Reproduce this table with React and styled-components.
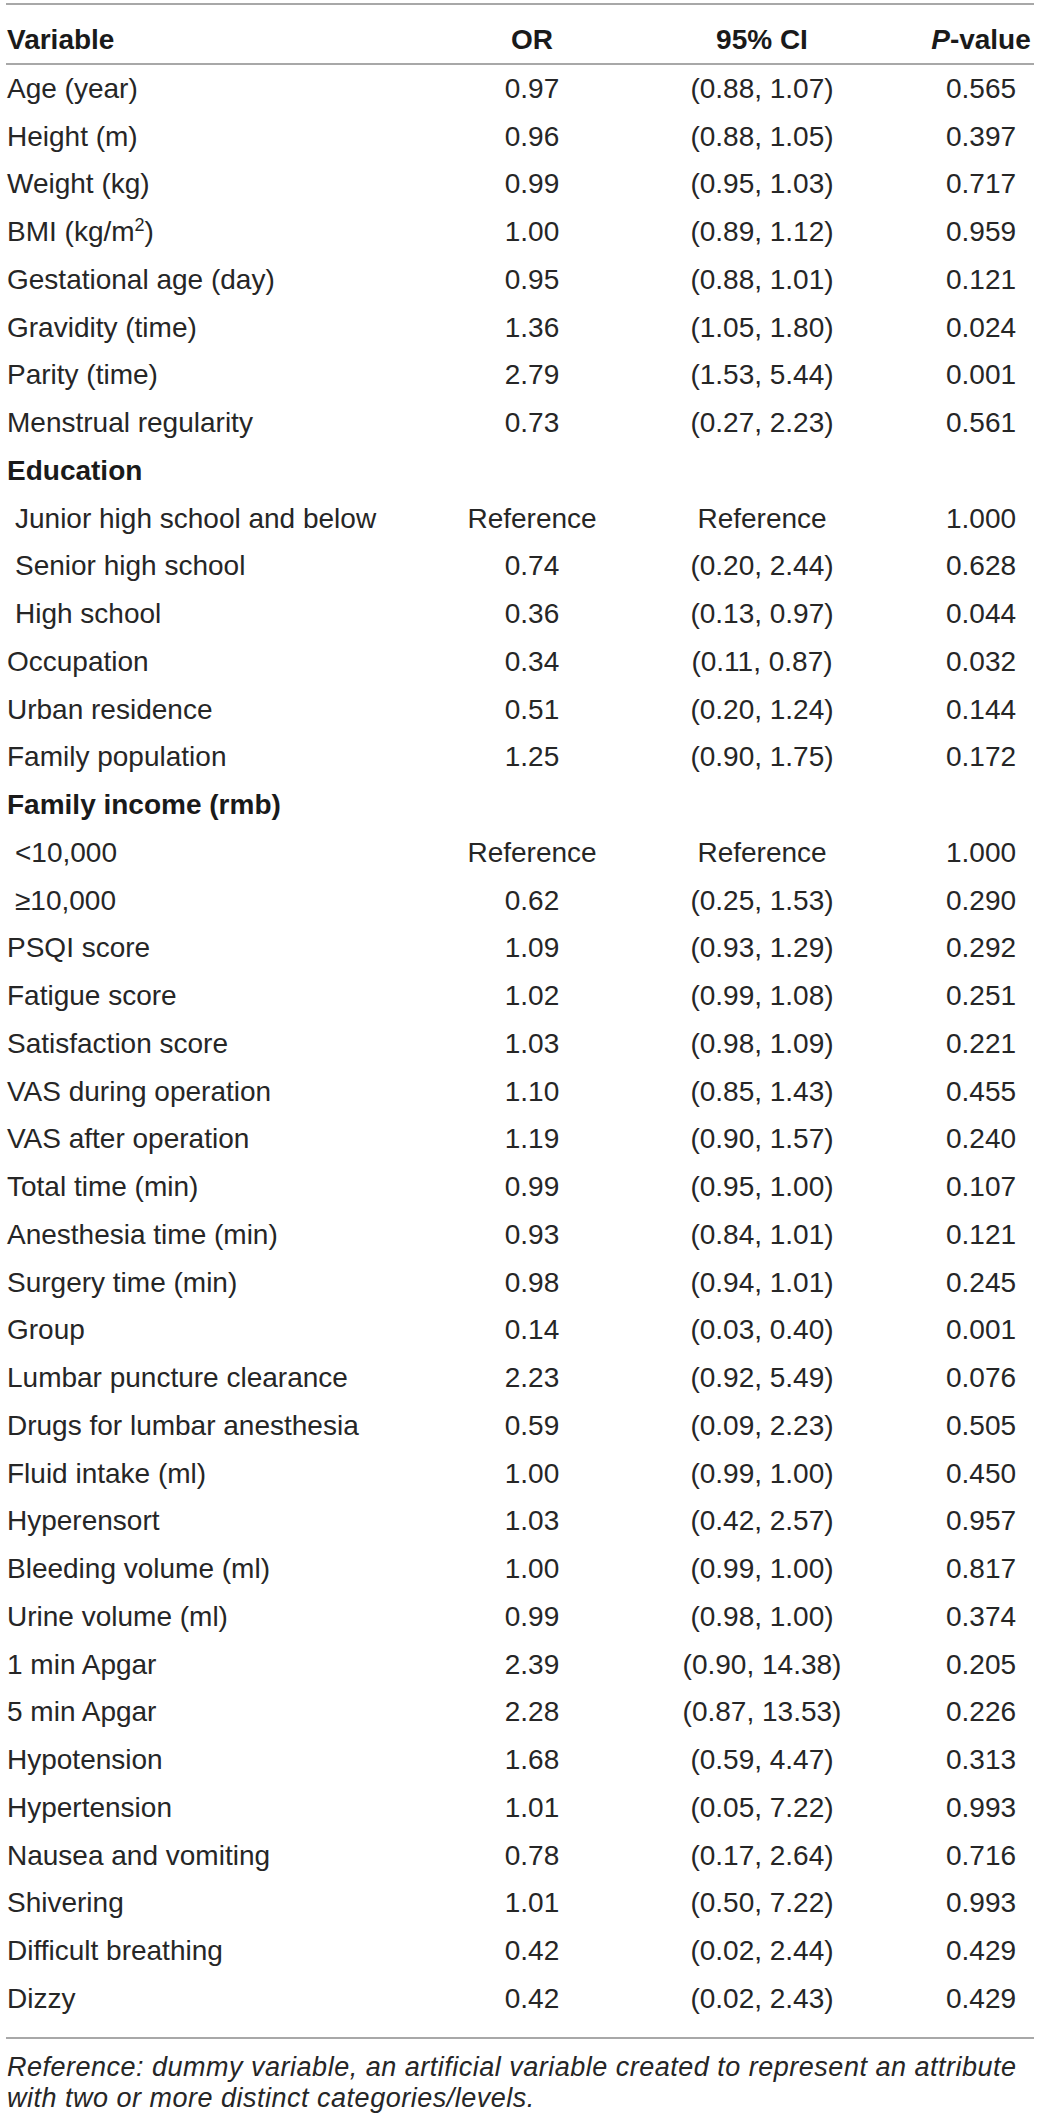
import styled, { createGlobalStyle } from "styled-components";

const rows = [
  ["Age (year)", "0.97", "(0.88, 1.07)", "0.565"],
  ["Height (m)", "0.96", "(0.88, 1.05)", "0.397"],
  ["Weight (kg)", "0.99", "(0.95, 1.03)", "0.717"],
  ["BMI", "1.00", "(0.89, 1.12)", "0.959"],
  ["Gestational age (day)", "0.95", "(0.88, 1.01)", "0.121"],
  ["Gravidity (time)", "1.36", "(1.05, 1.80)", "0.024"],
  ["Parity (time)", "2.79", "(1.53, 5.44)", "0.001"],
  ["Menstrual regularity", "0.73", "(0.27, 2.23)", "0.561"],
  ["Education"],
  ["Junior high school and below", "Reference", "Reference", "1.000", true],
  ["Senior high school", "0.74", "(0.20, 2.44)", "0.628", true],
  ["High school", "0.36", "(0.13, 0.97)", "0.044", true],
  ["Occupation", "0.34", "(0.11, 0.87)", "0.032"],
  ["Urban residence", "0.51", "(0.20, 1.24)", "0.144"],
  ["Family population", "1.25", "(0.90, 1.75)", "0.172"],
  ["Family income (rmb)"],
  ["<10,000", "Reference", "Reference", "1.000", true],
  ["≥10,000", "0.62", "(0.25, 1.53)", "0.290", true],
  ["PSQI score", "1.09", "(0.93, 1.29)", "0.292"],
  ["Fatigue score", "1.02", "(0.99, 1.08)", "0.251"],
  ["Satisfaction score", "1.03", "(0.98, 1.09)", "0.221"],
  ["VAS during operation", "1.10", "(0.85, 1.43)", "0.455"],
  ["VAS after operation", "1.19", "(0.90, 1.57)", "0.240"],
  ["Total time (min)", "0.99", "(0.95, 1.00)", "0.107"],
  ["Anesthesia time (min)", "0.93", "(0.84, 1.01)", "0.121"],
  ["Surgery time (min)", "0.98", "(0.94, 1.01)", "0.245"],
  ["Group", "0.14", "(0.03, 0.40)", "0.001"],
  ["Lumbar puncture clearance", "2.23", "(0.92, 5.49)", "0.076"],
  ["Drugs for lumbar anesthesia", "0.59", "(0.09, 2.23)", "0.505"],
  ["Fluid intake (ml)", "1.00", "(0.99, 1.00)", "0.450"],
  ["Hyperensort", "1.03", "(0.42, 2.57)", "0.957"],
  ["Bleeding volume (ml)", "1.00", "(0.99, 1.00)", "0.817"],
  ["Urine volume (ml)", "0.99", "(0.98, 1.00)", "0.374"],
  ["1 min Apgar", "2.39", "(0.90, 14.38)", "0.205"],
  ["5 min Apgar", "2.28", "(0.87, 13.53)", "0.226"],
  ["Hypotension", "1.68", "(0.59, 4.47)", "0.313"],
  ["Hypertension", "1.01", "(0.05, 7.22)", "0.993"],
  ["Nausea and vomiting", "0.78", "(0.17, 2.64)", "0.716"],
  ["Shivering", "1.01", "(0.50, 7.22)", "0.993"],
  ["Difficult breathing", "0.42", "(0.02, 2.44)", "0.429"],
  ["Dizzy", "0.42", "(0.02, 2.43)", "0.429"],
];

const GlobalStyle = createGlobalStyle`
  body {
    margin: 0;
    background: #fff;
    font-family: "Liberation Sans", Arial, sans-serif;
    color: #262626;
  }
`;

const App = () => {
  return (
    <Page>
      <GlobalStyle />
      <HeadRow>
        <Label $bold>Variable</Label>
        <Cell>OR</Cell>
        <Cell>95% CI</Cell>
        <PCell>
          <i>P</i>-value
        </PCell>
      </HeadRow>
      <Body>
        {rows.map(([label, or, ci, p, indent]) =>
          or === undefined ? (
            <Row key={label}>
              <Label $bold>{label}</Label>
            </Row>
          ) : (
            <Row key={label}>
              <Label $indent={indent}>
                {label === "BMI" ? (
                  <>
                    BMI (kg/m<Sup>2</Sup>)
                  </>
                ) : (
                  label
                )}
              </Label>
              <Cell>{or}</Cell>
              <Cell>{ci}</Cell>
              <PCell>{p}</PCell>
            </Row>
          )
        )}
      </Body>
      <Footnote>
        Reference: dummy variable, an artificial variable created to represent
        an attribute with two or more distinct categories/levels.
      </Footnote>
    </Page>
  );
};

export default App;

const Page = styled.div`
  width: 1028px;
  margin: 3px 6px 0;
`;

const HeadRow = styled.div`
  display: grid;
  grid-template-columns: 424px 204px 256px 144px;
  align-items: center;
  box-sizing: border-box;
  height: 62px;
  padding-top: 11px;
  border-top: 2px solid #a8a8a8;
  border-bottom: 2px solid #a8a8a8;
  font-size: 28px;
  font-weight: bold;
  color: #1a1a1a;
`;

const Body = styled.div`
  padding: 0 0 14px;
  border-bottom: 2px solid #a8a8a8;
`;

const Row = styled.div`
  display: grid;
  grid-template-columns: 424px 204px 256px 144px;
  align-items: center;
  height: 47.75px;
  font-size: 28px;
`;

const Label = styled.div`
  padding-left: ${(p) => (p.$indent ? "9px" : "1px")};
  font-weight: ${(p) => (p.$bold ? "bold" : "normal")};
  color: ${(p) => (p.$bold ? "#1a1a1a" : "#262626")};
  white-space: nowrap;
`;

const Cell = styled.div`
  text-align: center;
  white-space: nowrap;
`;

const PCell = styled(Cell)`
  padding-left: 38px;
`;

const Sup = styled.sup`
  font-size: 18px;
  line-height: 0;
`;

const Footnote = styled.p`
  margin: 13px 0 0 1px;
  font-style: italic;
  font-size: 27px;
  letter-spacing: 0.5px;
  line-height: 31px;
  color: #262626;
`;
